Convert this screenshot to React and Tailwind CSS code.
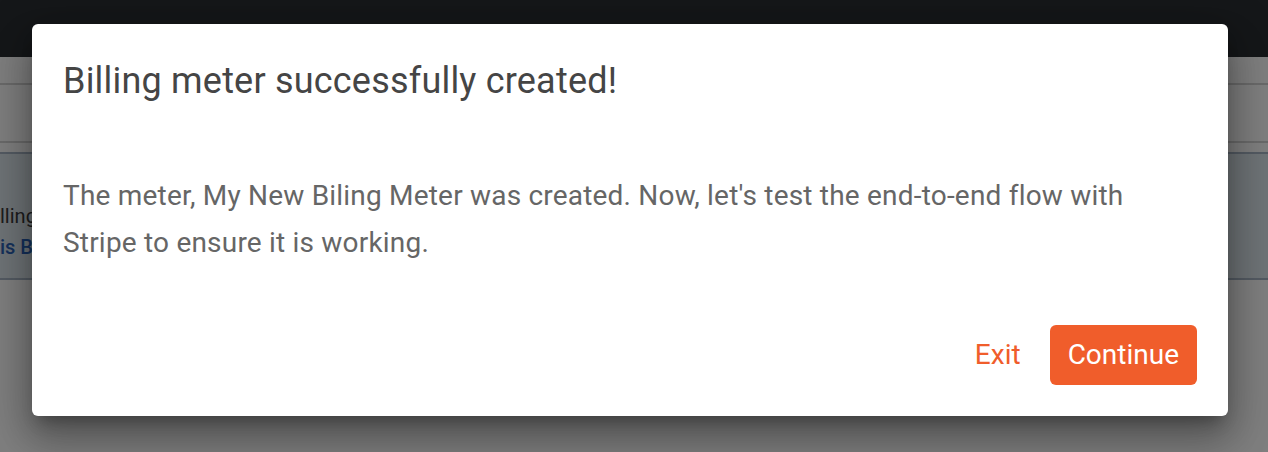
import React from "react";

function PageBehind() {
  return (
    <div className="min-h-[452px] bg-white">
      <div className="h-[57px] bg-[#2a2e33]" />
      <div className="h-[26px]" />
      <div className="h-[58px] border-t-2 border-[#d5d5d5]" />
      <div className="border-t-2 border-[#d5d5d5] pt-[9px]">
        <div className="h-[128px] border-y-2 border-[#a9b6c6] bg-[#dfe8ee] pt-[47px] text-[20px] leading-[31px]">
          <p className="text-[#3a3a3a]">lling</p>
          <p className="font-medium text-[#2b63b8]">is B</p>
        </div>
      </div>
    </div>
  );
}

export default function App() {
  return (
    <div className="relative h-[452px] w-full overflow-hidden" style={{ fontFamily: "Roboto, 'Noto Sans', sans-serif" }}>
      <PageBehind />
      <div className="absolute inset-0 bg-black/50" />
      <div className="absolute left-[32px] top-[24px] w-[1196px] rounded-md bg-white shadow-[0_11px_15px_-7px_rgba(0,0,0,0.3),0_24px_38px_3px_rgba(0,0,0,0.22),0_9px_46px_8px_rgba(0,0,0,0.18)]">
        <h2 className="px-[31px] pt-[33px] text-[36px] font-normal leading-[48px] tracking-[0.2px] text-[#454545]">
          Billing meter successfully created!
        </h2>
        <p className="mt-[67px] px-[31px] text-[28px] leading-[47px] tracking-[0.2px] text-[#666666]">
          The meter, My New Biling Meter was created. Now, let's test the end-to-end flow with
          <br />
          Stripe to ensure it is working.
        </p>
        <div className="mt-[59px] flex items-center justify-end gap-[11px] px-[31px] pb-[31px]">
          <button className="h-[60px] rounded-md px-[18px] text-[28px] text-[#f05d2b]">Exit</button>
          <button className="h-[60px] rounded-md bg-[#f05d2b] px-[18px] text-[28px] text-white">Continue</button>
        </div>
      </div>
    </div>
  );
}
